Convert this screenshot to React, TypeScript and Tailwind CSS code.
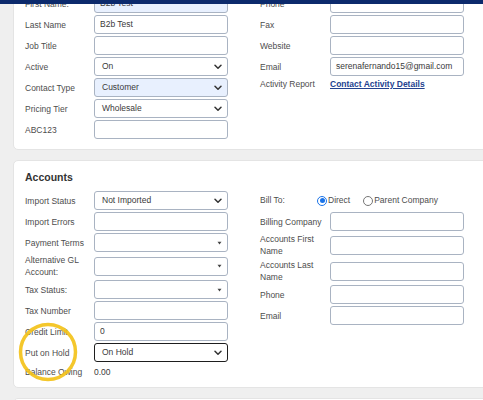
import React from "react";

function Chevron() {
  return (
    <svg width="8" height="6" viewBox="0 0 8 6" className="shrink-0">
      <path d="M1 1.2L4 4.2L7 1.2" fill="none" stroke="#333" strokeWidth="1.5" strokeLinecap="round" strokeLinejoin="round" />
    </svg>
  );
}

function Tri() {
  return (
    <svg width="5" height="4" viewBox="0 0 5 4" className="shrink-0">
      <path d="M0.5 0.8H4.5L2.5 3.4Z" fill="#444" />
    </svg>
  );
}

function Row({ label, children, labelCls = "w-[69px]" }: { label: React.ReactNode; children?: React.ReactNode; labelCls?: string }) {
  return (
    <div className="flex items-center min-h-[19px]">
      <div className={`${labelCls} shrink-0 leading-[12px] text-[#4d4d4d]`}>{label}</div>
      {children}
    </div>
  );
}

function Input({ value = "", fill = false }: { value?: string; fill?: boolean }) {
  return (
    <div
      className={
        fill
          ? "w-[134px] h-[19px] border border-[#a9b3c2] rounded-[3px] bg-[#e8f0fe] pl-[5px] flex items-center text-[#3a3a3a]"
          : "w-[134px] h-[19px] border border-[#a9b3c2] rounded-[3px] bg-white pl-[5px] flex items-center text-[#3a3a3a]"
      }
    >
      {value}
    </div>
  );
}

function Select({ value = "", fill = false, tri = false, dark = false }: { value?: string; fill?: boolean; tri?: boolean; dark?: boolean }) {
  const base = "w-[134px] h-[19px] rounded-[3px] flex items-center justify-between pl-[7px] pr-[5px] text-[#3a3a3a]";
  const cls = dark
    ? `${base} border-[1.5px] border-[#1e1e1e] bg-white`
    : fill
    ? `${base} border border-[#a9b3c2] bg-[#e8f0fe]`
    : `${base} border border-[#a9b3c2] bg-white`;
  return (
    <div className={cls}>
      <span>{value}</span>
      {tri ? <Tri /> : <Chevron />}
    </div>
  );
}

export default function App() {
  return (
    <div
      className="relative w-[483px] h-[400px] overflow-hidden bg-[#efefef] flex flex-col text-[8.5px]"
      style={{ fontFamily: '"Liberation Sans", Arial, sans-serif' }}
    >
      <div className="h-[4px] shrink-0 bg-[#0c2a6c]" />
      <div className="flex-1 overflow-hidden">
        <div className="mt-[-21px] pl-[13px] flex flex-col gap-[10px]">
          {/* Top card */}
          <div className="bg-white rounded-[5px] border border-[#e4e4e4] mr-[-12px] pt-[10px] pb-[10px] pl-[11px] flex gap-[32px]">
            <div className="flex flex-col gap-[2px] w-[203px]">
              <Row label="First Name:"><Input value="B2b Test" fill /></Row>
              <Row label="Last Name"><Input value="B2b Test" /></Row>
              <Row label="Job Title"><Input /></Row>
              <Row label="Active"><Select value="On" /></Row>
              <Row label="Contact Type"><Select value="Customer" fill /></Row>
              <Row label="Pricing Tier"><Select value="Wholesale" /></Row>
              <Row label="ABC123"><Input /></Row>
            </div>
            <div className="flex flex-col gap-[2px] w-[204px]">
              <Row label="Phone" labelCls="w-[70px]"><Input /></Row>
              <Row label="Fax" labelCls="w-[70px]"><Input /></Row>
              <Row label="Website" labelCls="w-[70px]"><Input /></Row>
              <Row label="Email" labelCls="w-[70px]"><Input value="serenafernando15@gmail.com" /></Row>
              <div className="flex items-center h-[10px] mt-[1px]">
                <div className="w-[70px] shrink-0 text-[#4d4d4d]">Activity Report</div>
                <span className="font-bold text-[#23428f] underline">Contact Activity Details</span>
              </div>
            </div>
          </div>

          {/* Accounts card */}
          <div className="bg-white rounded-[5px] border border-[#e4e4e4] mr-[-12px] pt-[9px] pb-[8px] pl-[11px]">
            <div className="text-[10.5px] leading-[14px] font-bold text-[#333] mb-[7px]">Accounts</div>
            <div className="flex gap-[32px]">
              <div className="flex flex-col gap-[2px] w-[203px]">
                <Row label="Import Status"><Select value="Not Imported" /></Row>
                <Row label="Import Errors"><Input /></Row>
                <Row label="Payment Terms"><Select tri /></Row>
                <Row label={<>Alternative GL<br />Account:</>}><Select tri /></Row>
                <Row label="Tax Status:"><Select tri /></Row>
                <Row label="Tax Number"><Input /></Row>
                <Row label="Credit Limit"><Input value="0" /></Row>
                <Row label="Put on Hold"><Select value="On Hold" dark /></Row>
                <div className="flex items-center h-[14px] mt-[1px]">
                  <div className="w-[69px] shrink-0 text-[#4d4d4d]">Balance Owing</div>
                  <span className="text-[#3a3a3a]">0.00</span>
                </div>
              </div>
              <div className="flex flex-col gap-[2px] w-[204px]">
                <div className="flex items-center h-[19px]">
                  <div className="w-[57px] shrink-0 text-[#4d4d4d]">Bill To:</div>
                  <span className="w-[10px] h-[10px] rounded-full border-[1.5px] border-[#1a73e8] bg-white flex items-center justify-center">
                    <span className="w-[5px] h-[5px] rounded-full bg-[#1a73e8]" />
                  </span>
                  <span className="ml-[1px] text-[#4d4d4d]">Direct</span>
                  <span className="ml-[13px] w-[10px] h-[10px] rounded-full border border-[#767676] bg-white" />
                  <span className="ml-[1px] text-[#4d4d4d]">Parent Company</span>
                </div>
                <Row label="Billing Company" labelCls="w-[70px]"><Input /></Row>
                <Row label={<>Accounts First<br />Name</>} labelCls="w-[70px]"><Input /></Row>
                <Row label={<>Accounts Last<br />Name</>} labelCls="w-[70px]"><Input /></Row>
                <Row label="Phone" labelCls="w-[70px]"><Input /></Row>
                <Row label="Email" labelCls="w-[70px]"><Input /></Row>
              </div>
            </div>
          </div>

          {/* Next card (cut off) */}
          <div className="bg-white rounded-[5px] border border-[#e4e4e4] mr-[-12px] h-[40px]" />
        </div>
      </div>

      <svg className="absolute left-0 top-0 pointer-events-none" width="483" height="400" viewBox="0 0 483 400">
        <circle cx="48" cy="352" r="27.5" fill="none" stroke="#f3c21a" strokeWidth="3.5" opacity="0.92" />
      </svg>
    </div>
  );
}
